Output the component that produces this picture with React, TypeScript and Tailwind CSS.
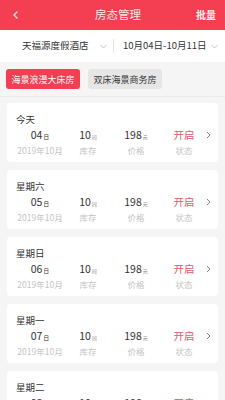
import React from "react";

const days = [
  { title: "今天", d: "04" },
  { title: "星期六", d: "05" },
  { title: "星期日", d: "06" },
  { title: "星期一", d: "07" },
  { title: "星期二", d: "08" },
];

function Chevron() {
  return (
    <svg width="7" height="5" viewBox="0 0 7 5">
      <path d="M0.5 1 L3.5 4 L6.5 1" fill="none" stroke="#b5b5b5" strokeWidth="0.8" />
    </svg>
  );
}

export default function App() {
  return (
    <div
      className="w-[225px] h-[400px] overflow-hidden bg-[#f5f5f5] flex flex-col"
      style={{ fontFamily: '"Noto Sans CJK SC", "Noto Sans", sans-serif' }}
    >
      {/* header */}
      <div className="h-[30px] bg-[#f43e52] flex items-center justify-between pl-[12px] pr-[9px] shrink-0">
        <svg width="8" height="10" viewBox="0 0 8 10">
          <path d="M5.5 1.5 L2 5 L5.5 8.5" fill="none" stroke="#ffd9dd" strokeWidth="1.4" />
        </svg>
        <span className="text-[11.5px] text-[#ffe3e6] ml-[20px] leading-none">房态管理</span>
        <span className="text-[10px] font-bold text-[#ffeef0] leading-none">批量</span>
      </div>
      {/* filters */}
      <div className="h-[32px] bg-white flex items-center shrink-0">
        <div className="w-[113px] flex items-center pl-[22px] gap-[11px]">
          <span className="text-[9.5px] text-[#333] leading-none whitespace-nowrap">天福源度假酒店</span>
          <Chevron />
        </div>
        <div className="w-px h-[14px] bg-[#e5e5e5]" />
        <div className="flex-1 flex items-center pl-[9px] gap-[5px]">
          <span className="text-[9.5px] text-[#333] leading-none whitespace-nowrap">10月04日-10月11日</span>
          <Chevron />
        </div>
      </div>
      {/* tabs */}
      <div className="h-[35px] flex items-start pt-[7px] px-[6px] gap-[8px] border-b border-[#ebebeb] shrink-0">
        <div className="w-[74px] h-[20px] rounded-[3px] bg-[#f43e52] flex items-center justify-center text-[9px] text-white leading-none whitespace-nowrap">
          海景浪漫大床房
        </div>
        <div className="w-[74px] h-[20px] rounded-[3px] bg-[#e6e6e6] flex items-center justify-center text-[9px] text-[#333] leading-none whitespace-nowrap">
          双床海景商务房
        </div>
      </div>
      {/* list */}
      <div className="flex flex-col gap-[8px] px-[7px] pt-[6px]">
        {days.map((d) => (
          <div key={d.d} className="bg-white rounded-[4px] h-[59px] shrink-0 pl-[9px] pt-[10px]">
            <div className="text-[9.5px] leading-[13px] text-[#333]">{d.title}</div>
            <div className="flex items-start mt-[2px]">
              <div className="grid grid-cols-[48px_48px_48px_48px]">
                <div className="flex items-baseline justify-center h-[14px] leading-[14px] text-[10.5px] text-[#333]">
                  {d.d}
                  <span className="text-[6px] ml-[1px]">日</span>
                </div>
                <div className="flex items-baseline justify-center h-[14px] leading-[14px] text-[10.5px] text-[#333]">
                  10
                  <span className="text-[5px] text-[#888] ml-[1px]">间</span>
                </div>
                <div className="flex items-baseline justify-center h-[14px] leading-[14px] text-[10.5px] text-[#333]">
                  198
                  <span className="text-[5px] text-[#888] ml-[1px]">元</span>
                </div>
                <div className="flex items-center justify-center h-[14px] leading-[14px] text-[10.5px] text-[#e8566a]">
                  开启
                </div>
                <div className="text-center text-[8.5px] leading-[12px] mt-[2px] text-[#c4c4c4] whitespace-nowrap">2019年10月</div>
                <div className="text-center text-[8.5px] leading-[12px] mt-[2px] text-[#c4c4c4]">库存</div>
                <div className="text-center text-[8.5px] leading-[12px] mt-[2px] text-[#c4c4c4]">价格</div>
                <div className="text-center text-[8.5px] leading-[12px] mt-[2px] text-[#c4c4c4]">状态</div>
              </div>
              <svg width="5" height="8" viewBox="0 0 5 8" className="-ml-[2px] mt-[3px]">
                <path d="M1 1 L4 4 L1 7" fill="none" stroke="#777" strokeWidth="0.9" />
              </svg>
            </div>
          </div>
        ))}
      </div>
    </div>
  );
}
